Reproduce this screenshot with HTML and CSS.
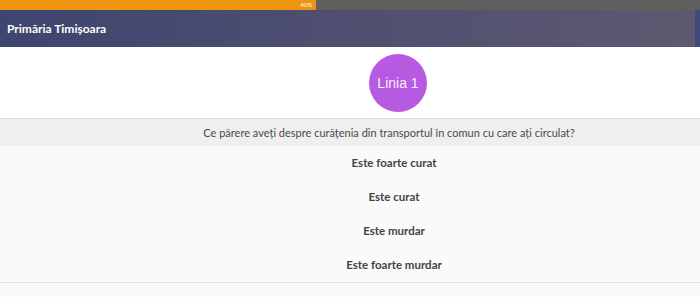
FILE: index.html
```html
<!DOCTYPE html>
<html lang="ro">
  <head>
    <meta charset="UTF-8" />
    <meta name="viewport" content="width=device-width, initial-scale=1.0" />
    <title>Chestionar</title>
    <link rel="stylesheet" href="styles.css">
  </head>
  <body>
    <div class="progress">
      <div class="progress-bar" style="width: 45.2%">40%</div>
    </div>

    <div class="header">
      <span class="brand">Primăria Timișoara</span>
      <span class="edge"></span>
    </div>

    <div class="line-box">
      <div class="line-badge">Linia 1</div>
    </div>

    <div class="question">Ce părere aveți despre curățenia din transportul în comun cu care ați circulat?</div>

    <div class="answers">
      <div class="answer">Este foarte curat</div>
      <div class="answer">Este curat</div>
      <div class="answer">Este murdar</div>
      <div class="answer">Este foarte murdar</div>
    </div>

    <div class="footer"></div>
  </body>
</html>
```

FILE: styles.css
```css
body {
  font-family: Lato, "Open Sans", sans-serif;
  margin: 0;
  padding: 0;
  background: #fafafa;
  color: #444;
  overflow: hidden;
}
.progress {
  height: 10px;
  background: #5f5f5d;
}
.progress-bar {
  height: 10px;
  background: #ee950f;
  color: #fff;
  font-size: 6px;
  line-height: 10px;
  text-align: right;
  padding-right: 4px;
  box-sizing: border-box;
}
.header {
  height: 37px;
  display: flex;
  align-items: center;
  background: linear-gradient(90deg, #3e456f 0%, #4d4e70 45%, #5d5970 100%);
  box-shadow: 0 1px 1px rgba(0, 0, 0, 0.3);
}
.brand {
  flex: 1;
  padding-left: 7px;
  color: #fff;
  font-size: 12px;
  font-weight: bold;
}
.edge {
  width: 5px;
  height: 100%;
  background: #3f4b7c;
}
.line-box {
  background: #fff;
  height: 71px;
  display: flex;
  align-items: center;
  justify-content: center;
  padding-left: 96px;
  border-bottom: 1px solid #dcdcdc;
}
.line-badge {
  width: 58px;
  height: 58px;
  border-radius: 50%;
  background: #b75ae2;
  color: #f6eefa;
  font-family: "Liberation Sans", Arial, sans-serif;
  font-size: 14px;
  display: flex;
  align-items: center;
  justify-content: center;
}
.question {
  background: #efefef;
  height: 27px;
  line-height: 27px;
  text-align: center;
  padding-left: 78px;
  font-size: 11px;
  color: #4a4a4a;
}
.answers {
  padding: 0 0 0 88px;
  border-bottom: 1px solid #e2e2e2;
}
.answer {
  height: 34px;
  line-height: 33px;
  text-align: center;
  font-size: 11.5px;
  font-weight: bold;
  color: #444;
}
.footer {
  height: 20px;
}
```
